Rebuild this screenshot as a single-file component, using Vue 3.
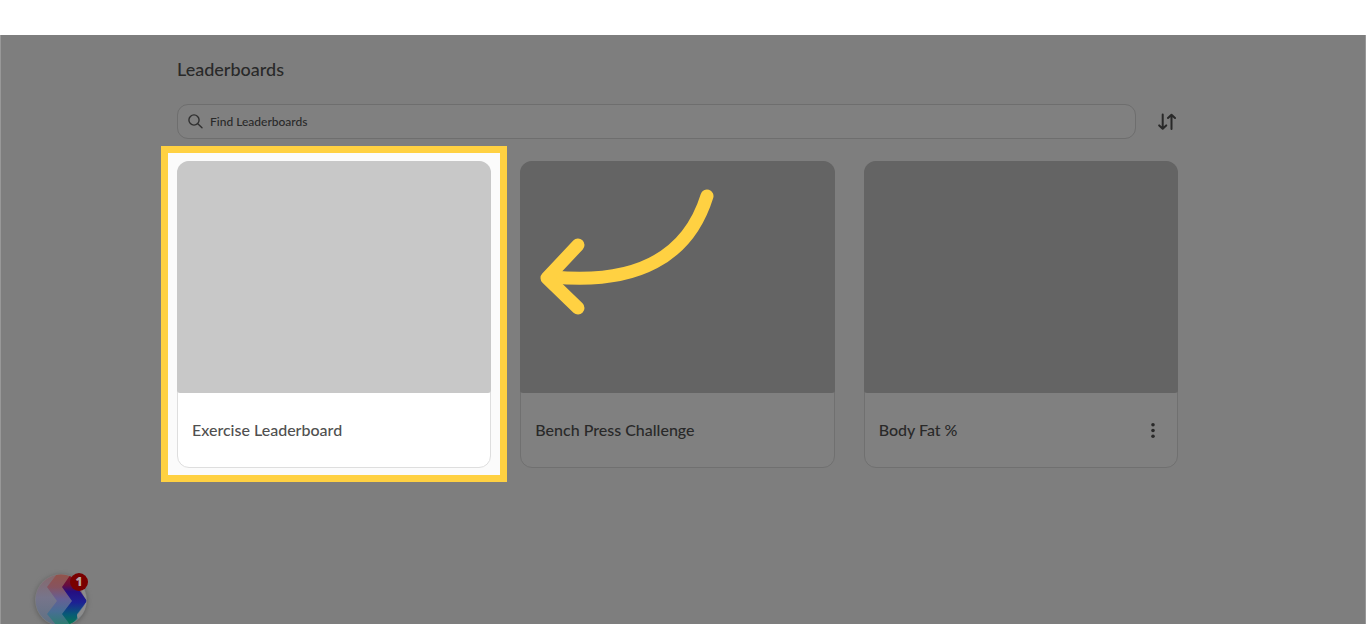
<script setup>
import { ref, computed } from 'vue'

const query = ref('')
const descending = ref(false)
const boards = [
  { name: 'Exercise Leaderboard', highlighted: true, menu: false },
  { name: 'Bench Press Challenge', highlighted: false, menu: false },
  { name: 'Body Fat %', highlighted: false, menu: true }
]
const visible = computed(() => {
  const found = boards.filter((b) => b.name.toLowerCase().includes(query.value.toLowerCase()))
  return descending.value ? found.reverse() : found
})
</script>

<template>
  <div class="page">
    <div class="topbar"></div>
    <main class="content">
      <h1 class="title">Leaderboards</h1>

      <div class="tools">
        <label class="search">
          <svg class="search-icon" viewBox="0 0 16 16" aria-hidden="true">
            <circle cx="6" cy="6" r="5.1" />
            <path d="M9.8 9.8 L14 13.8" />
          </svg>
          <input v-model="query" type="text" placeholder="Find Leaderboards" aria-label="Find Leaderboards" />
        </label>
        <button class="sort" type="button" aria-label="Sort" @click="descending = !descending">
          <svg viewBox="0 0 18 18" aria-hidden="true">
            <path d="M4.7 1.5 V15.5 M1.2 12.4 L4.7 15.7 L8.2 12.4" />
            <path d="M13.5 16 V2 M10 5 L13.5 1.7 L17 5" />
          </svg>
        </button>
      </div>

      <div class="grid">
        <article v-for="board in visible" :key="board.name" class="cell" :class="{ highlighted: board.highlighted }">
          <div class="card">
            <div class="cover"></div>
            <div class="info">
              <h2 class="name">{{ board.name }}</h2>
              <button v-if="board.menu" class="menu" type="button" aria-label="More options">
                <svg viewBox="0 0 6 16" aria-hidden="true">
                  <circle cx="3" cy="2.8" r="1.8" />
                  <circle cx="3" cy="8.5" r="1.8" />
                  <circle cx="3" cy="14.2" r="1.8" />
                </svg>
              </button>
            </div>
          </div>
          <svg v-if="board.highlighted" class="arrow" viewBox="0 0 174 128" aria-hidden="true">
            <path d="M167 6 C148 67 97 95 13 87" />
            <path d="M38 55 L7 88 L38 118" />
          </svg>
        </article>
      </div>
    </main>

    <button class="chat" type="button" aria-label="Open messages, 1 unread">
      <svg viewBox="0 0 52 52" aria-hidden="true">
        <defs>
          <clipPath id="disc"><circle cx="26" cy="26" r="25.5" /></clipPath>
          <linearGradient id="base" x1="0" y1="0" x2="0" y2="1">
            <stop offset="0" stop-color="#87686a" />
            <stop offset="0.45" stop-color="#77758b" />
            <stop offset="1" stop-color="#5d7184" />
          </linearGradient>
          <linearGradient id="middle" x1="0" y1="0" x2="0" y2="1">
            <stop offset="0" stop-color="#92534a" />
            <stop offset="0.25" stop-color="#87535e" />
            <stop offset="0.48" stop-color="#655f95" />
            <stop offset="0.72" stop-color="#486e94" />
            <stop offset="1" stop-color="#2b7e6d" />
          </linearGradient>
          <linearGradient id="front" x1="0" y1="0" x2="0" y2="1">
            <stop offset="0" stop-color="#8b1717" />
            <stop offset="0.22" stop-color="#650c41" />
            <stop offset="0.34" stop-color="#250e81" />
            <stop offset="0.55" stop-color="#1d2194" />
            <stop offset="0.78" stop-color="#075b76" />
            <stop offset="1" stop-color="#077b4b" />
          </linearGradient>
        </defs>
        <g clip-path="url(#disc)">
          <rect width="52" height="52" fill="url(#base)" />
          <path d="M38 0 H52 V52 H38 Z" fill="#8c8c8c" />
          <path d="M22 0 L12 13 L22 27 L12 40 L22 52 H42 L51 27 L38 0 Z" fill="url(#middle)" />
          <path d="M36 0 L27 13 L37 27 L27 40 L36 52 L42 44 L42 40 L52 27 L42 13 L52 0 Z" fill="url(#front)" />
          <path d="M52 28 L42 41 L44 52 H52 Z" fill="#8c8c8c" />
        </g>
      </svg>
      <span class="badge">1</span>
    </button>
  </div>
</template>

<style>
body {
  margin: 0;
}
</style>

<style scoped>
.page {
  position: relative;
  display: flex;
  flex-direction: column;
  box-sizing: border-box;
  min-height: 100vh;
  overflow: hidden;
  background: #7e7e7e;
  color: #292929;
  font-family: Lato, "Noto Sans", sans-serif;
}
.topbar {
  height: 35px;
  background: #fff;
}
.content {
  flex: 1;
  box-sizing: border-box;
  padding: 22px 187px 40px 176px;
  border: 0 solid #989898;
  border-width: 0 1px;
}
.title {
  margin: 0;
  font-size: 18px;
  line-height: 24px;
  font-weight: 500;
}
.tools {
  display: flex;
  align-items: center;
  gap: 22px;
  margin-top: 23px;
}
.search {
  flex: 1;
  display: flex;
  align-items: center;
  gap: 6px;
  box-sizing: border-box;
  height: 35px;
  padding: 0 10px;
  border: 1px solid #6e6e6e;
  border-radius: 11px;
  background: #808080;
}
.search-icon {
  width: 16px;
  height: 16px;
  fill: none;
  stroke: #303030;
  stroke-width: 1.4;
  stroke-linecap: round;
}
.search input {
  flex: 1;
  min-width: 0;
  padding: 0;
  border: 0;
  outline: 0;
  background: transparent;
  color: #292929;
  font: 500 12px/18px Lato, "Noto Sans", sans-serif;
}
.search input::placeholder {
  color: #292929;
  opacity: 1;
}
.sort {
  display: flex;
  padding: 0;
  margin-right: 2px;
  border: 0;
  background: transparent;
}
.sort svg {
  width: 18px;
  height: 18px;
  fill: none;
  stroke: #292929;
  stroke-width: 2;
  stroke-linecap: round;
  stroke-linejoin: round;
}
.grid {
  display: grid;
  grid-template-columns: repeat(3, 1fr);
  gap: 29px;
  margin-top: 22px;
}
.cell {
  position: relative;
}
.card {
  position: relative;
  box-sizing: border-box;
  border: 1px solid #707070;
  border-radius: 12px;
  background: #808080;
}
.cover {
  height: 232px;
  margin: -1px -1px 0;
  border-radius: 12px 12px 3px 3px;
  background: #646464;
}
.info {
  display: flex;
  align-items: center;
  justify-content: space-between;
  height: 74px;
  padding: 0 21px 0 14px;
}
.name {
  margin: 0;
  font-size: 16px;
  line-height: 24px;
  font-weight: 500;
}
.menu {
  display: flex;
  padding: 0;
  border: 0;
  background: transparent;
}
.menu svg {
  width: 6px;
  height: 16px;
  overflow: visible;
  fill: #292929;
}
.highlighted {
  z-index: 1;
}
.highlighted::before {
  content: "";
  position: absolute;
  inset: -15px -16px -14px;
  border: 7px solid #ffd142;
  background: #fbfbfb;
}
.highlighted .card {
  border-color: #dedede;
  background: #fff;
  color: #505050;
}
.highlighted .cover {
  background: #c8c8c8;
}
.arrow {
  position: absolute;
  top: 29px;
  left: 100%;
  width: 174px;
  height: 128px;
  margin-left: 49px;
  overflow: visible;
  fill: none;
  stroke: #ffd142;
  stroke-width: 13;
  stroke-linecap: round;
  stroke-linejoin: round;
}
.chat {
  position: absolute;
  left: 35px;
  bottom: -2px;
  width: 52px;
  height: 52px;
  padding: 0;
  border: 0;
  border-radius: 50%;
  background: transparent;
  box-shadow: 0 1px 5px #5c5c5c;
}
.chat svg {
  display: block;
  width: 52px;
  height: 52px;
}
.badge {
  position: absolute;
  top: -1px;
  right: -1px;
  width: 18px;
  height: 18px;
  border-radius: 50%;
  background: #790000;
  color: #b5a5a5;
  font: 800 12px/18px "Open Sans", sans-serif;
  text-align: center;
}
</style>
